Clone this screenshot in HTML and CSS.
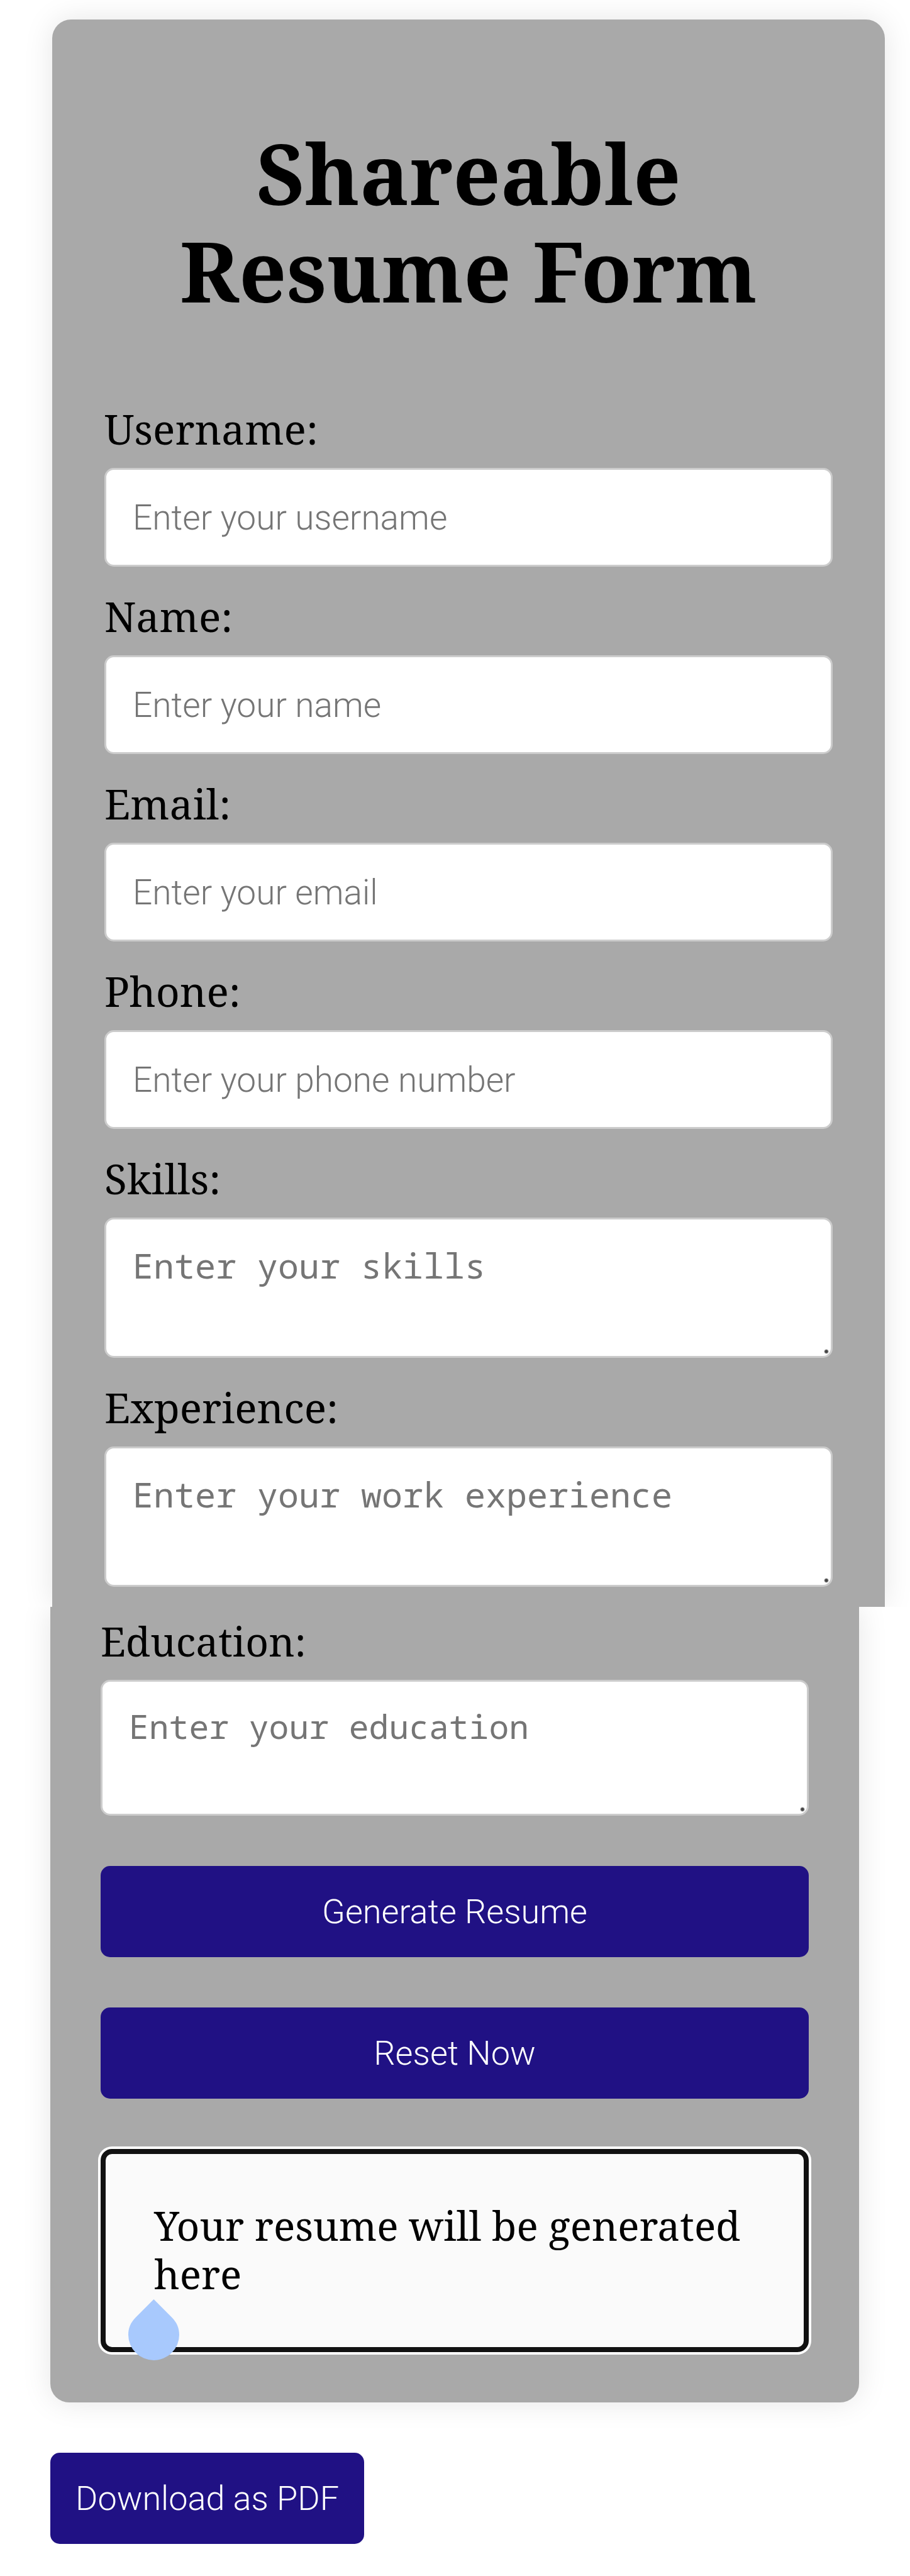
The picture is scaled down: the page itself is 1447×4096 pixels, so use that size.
FILE: index.html
```
<!DOCTYPE html>
<html lang="en">
<head>
<meta charset="utf-8">
<meta name="viewport" content="width=device-width, initial-scale=1">
<title>Shareable Resume Form</title>
<link rel="stylesheet" href="styles.css">
</head>
<body>
<main>
  <form>
    <section class="card card-top">
      <h1 class="title">Shareable Resume Form</h1>
      <div class="field">
        <label for="username">Username:</label>
        <input type="text" id="username" placeholder="Enter your username">
      </div>
      <div class="field">
        <label for="name">Name:</label>
        <input type="text" id="name" placeholder="Enter your name">
      </div>
      <div class="field">
        <label for="email">Email:</label>
        <input type="email" id="email" placeholder="Enter your email">
      </div>
      <div class="field">
        <label for="phone">Phone:</label>
        <input type="tel" id="phone" placeholder="Enter your phone number">
      </div>
      <div class="field">
        <label for="skills">Skills:</label>
        <textarea id="skills" placeholder="Enter your skills"></textarea>
      </div>
      <div class="field">
        <label for="experience">Experience:</label>
        <textarea id="experience" placeholder="Enter your work experience"></textarea>
      </div>
    </section>
    <section class="card card-bottom">
      <div class="field">
        <label for="education">Education:</label>
        <textarea id="education" placeholder="Enter your education"></textarea>
      </div>
      <button class="button" type="button">Generate Resume</button>
      <button class="button" type="reset">Reset Now</button>
      <div class="result">
        <p>Your resume will be generated here</p>
        <svg class="handle" viewBox="0 0 82 98" aria-hidden="true"><path d="M41 0 L70 29 C78 37 82 46 82 57 A41 41 0 0 1 0 57 C0 46 4 37 12 29 Z"/></svg>
      </div>
    </section>
  </form>
  <button class="button download" type="button">Download as PDF</button>
</main>
</body>
</html>
```
FILE: styles.css
```
* {
  box-sizing: border-box;
}

body {
  margin: 0;
  background: #fff;
  color: #000;
  font-family: "Noto Serif", "Droid Serif", "DejaVu Serif", serif;
}

main {
  padding: 31px 0 50px;
  overflow: hidden;
}

.card {
  display: flex;
  flex-direction: column;
  background: #a9a9a9;
  box-shadow: 0 0 48px rgba(0, 0, 0, 0.1);
}

.card-top {
  margin: 0 40px 0 83px;
  padding: 167px 83px 32px;
  gap: 33px;
  border-radius: 30px 30px 0 0;
  font-size: 66px;
  line-height: 90px;
  clip-path: inset(-31px -60px 0 -83px);
}

.card-bottom {
  margin: 0 81px 0 80px;
  padding: 11px 80px 80px;
  gap: 80px;
  border-radius: 0 0 30px 30px;
  font-size: 64px;
  line-height: 87px;
  clip-path: inset(0 -81px -80px -80px);
}

.title {
  margin: 0 0 95px;
  padding: 0 80px;
  font-size: 132px;
  line-height: 155px;
  font-weight: 700;
  text-align: center;
}

.field {
  display: flex;
  flex-direction: column;
  gap: 18px;
}

input,
textarea {
  display: block;
  width: 100%;
  margin: 0;
  padding: 37px 42px;
  border: 3px solid #ccc;
  border-radius: 15px;
  background-color: #fff;
  font-size: 55px;
  line-height: 71px;
}

input {
  height: 157px;
  font-family: Roboto, sans-serif;
  font-weight: 300;
}

textarea {
  height: 223px;
  font-family: "Noto Sans Mono", "DejaVu Sans Mono", monospace;
  resize: none;
  background-image: radial-gradient(circle, #444 2px, transparent 4px);
  background-size: 8px 8px;
  background-position: right 3px bottom 3px;
  background-repeat: no-repeat;
}

.card-bottom textarea {
  height: 216px;
  padding: 35px 42px;
  font-size: 53px;
}

::placeholder {
  color: #757575;
  opacity: 1;
}

.button {
  height: 145px;
  padding: 0 40px;
  border: 0;
  border-radius: 15px;
  background: #201184;
  color: #fff;
  font: 300 54px/71px Roboto, sans-serif;
}

.download {
  display: block;
  margin: 80px 0 0 80px;
}

.result {
  position: relative;
  padding: 75px 77px 78px;
  border: 8px solid #111;
  border-radius: 18px;
  background: #fafafa;
  box-shadow: 0 0 0 4px #fff;
  line-height: 77px;
}

.result p {
  margin: 0;
}

.handle {
  position: absolute;
  left: 36px;
  bottom: -21px;
  width: 81px;
  height: 97px;
  fill: #a8c9fd;
}
```
